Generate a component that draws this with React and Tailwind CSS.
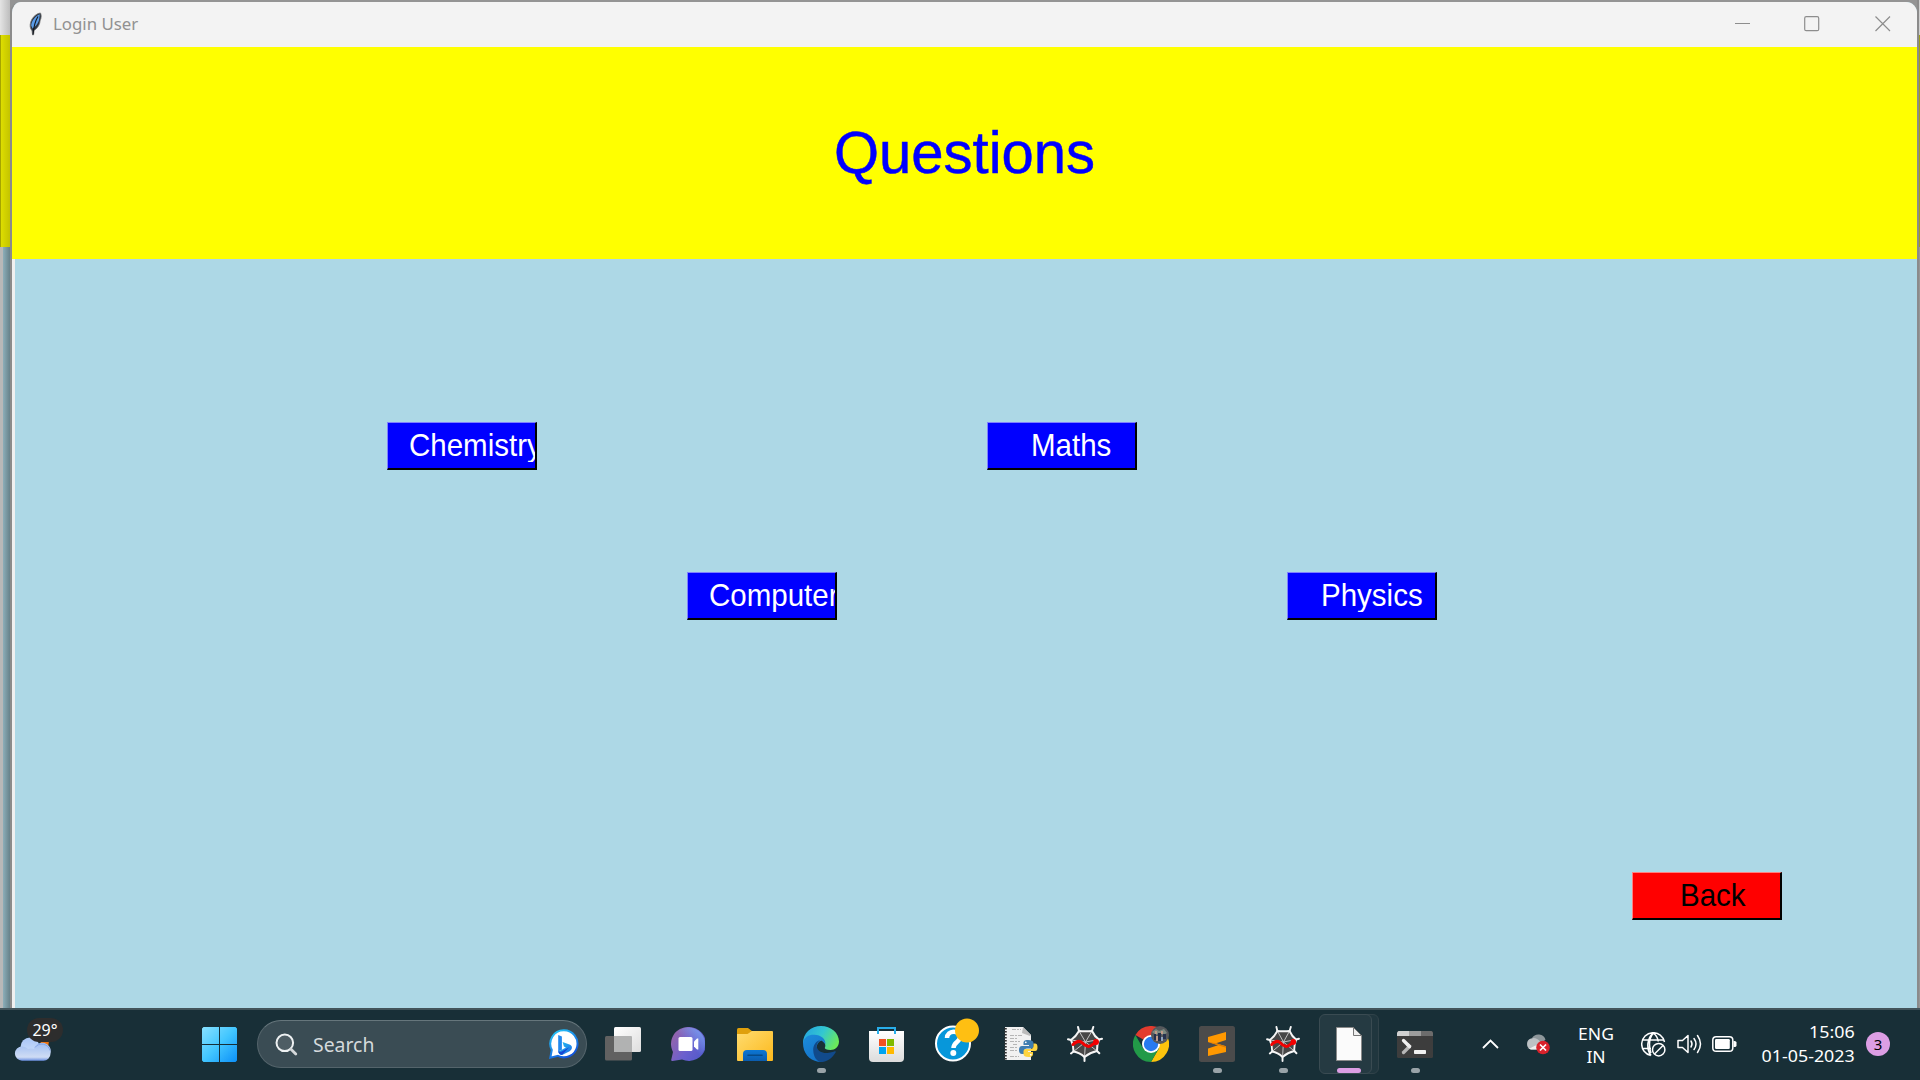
import React from "react";

const UI = "font-['Noto_Sans','Open_Sans',sans-serif]";

function Feather() {
  return (
    <svg width="14" height="24" viewBox="0 0 14 24">
      <path d="M11.5 1C7 1.500 2 6 1.200 12.500c-.3 2.500.5 4.500 1.800 6.300L3.600 23l1-.2.500-4.300C9 16 11 12 11.200 8.500 12.500 6 12.500 3 11.500 1z" fill="#2c3440" stroke="#777" strokeWidth=".8" />
      <path d="M10.800 2.200C6.500 4 2.500 8.500 2.200 13.500l1.300 3C6.500 15 10 10.500 10.300 6.500z" fill="#5a9be6" />
      <path d="M9 4.500C6.500 8.500 4.800 13 4 22.500" stroke="#15181e" strokeWidth="1.100" fill="none" />
    </svg>
  );
}

function TkButton({ children, className, pad }) {
  return (
    <button className={`block h-12 w-[150px] shrink-0 overflow-hidden whitespace-nowrap border-t border-l border-r-2 border-b-2 border-r-black border-b-black pb-[2px] text-left font-['Liberation_Sans',Arial,sans-serif] text-[29.500px] leading-[41px] ${pad} ${className}`}>
      <span className="block origin-center scale-y-[1.05]">{children}</span>
    </button>
  );
}

const blueBtn = "bg-[#0000ff] border-t-[#8080ff] border-l-[#8080ff] text-white";

function Cell({ children, dot }) {
  return (
    <div className="relative flex h-full w-[66px] shrink-0 items-center justify-center pb-[2px]">
      {children}
      {dot && <span className="absolute bottom-[7px] left-[29px] h-[5px] w-[9px] rounded-full bg-[#99a3a8]" />}
    </div>
  );
}

function WeatherIcon() {
  return (
    <svg width="38" height="26" viewBox="0 0 38 26">
      <defs>
        <linearGradient id="cl" x1="0" y1="0" x2="0" y2="1"><stop offset="0" stopColor="#9dbdf2" /><stop offset=".8" stopColor="#cfdcf4" /><stop offset="1" stopColor="#6a8fe0" /></linearGradient>
        <linearGradient id="cl2" x1="0" y1="0" x2="0" y2="1"><stop offset="0" stopColor="#a9c6f7" /><stop offset="1" stopColor="#cfe0fa" /></linearGradient>
      </defs>
      <path d="M26 5h9l-1 7h-5z" fill="#ef7410" />
      <circle cx="16" cy="11" r="9.500" fill="url(#cl2)" />
      <path d="M8 10.500a7 7 0 0 1 6 2.500 8 8 0 0 1 6 0 8.500 8.500 0 0 1 16.500 4.500A7 7 0 0 1 29 24.700H8a7 7 0 0 1 0-14.200z" fill="url(#cl)" />
      <path d="M21 11.500a8.500 8.500 0 0 1 15 3" fill="none" stroke="#86a6e8" strokeWidth="1" />
    </svg>
  );
}

function StartIcon() {
  return (
    <svg width="35" height="35" viewBox="0 0 35 35">
      <defs><linearGradient id="win" x1="0" y1="0" x2="35" y2="35" gradientUnits="userSpaceOnUse"><stop offset="0" stopColor="#88e1ff" /><stop offset=".5" stopColor="#42c6ff" /><stop offset="1" stopColor="#0c90f8" /></linearGradient></defs>
      <path d="M1.500 0H17v17H0V1.500zM18 0h15.500L35 1.500V17H18zM0 18h17v17H1.500L0 33.500zM18 18h17v15.500L33.500 35H18z" fill="url(#win)" />
    </svg>
  );
}

function SearchIcon() {
  return (
    <svg width="23" height="23" viewBox="0 0 23 23" fill="none" stroke="#eef1f2" strokeLinecap="round">
      <circle cx="9.800" cy="9.800" r="8.300" strokeWidth="2" fill="#4e5d64" /><path d="M15.800 16l5 5" strokeWidth="2.800" stroke="#d4d8da" />
    </svg>
  );
}

function BingIcon() {
  return (
    <svg width="30" height="30" viewBox="0 0 30 30">
      <defs>
        <linearGradient id="bg1" x1="0" y1="0" x2=".6" y2="1"><stop offset="0" stopColor="#25cdfa" /><stop offset="1" stopColor="#1356dc" /></linearGradient>
        <linearGradient id="bg2" x1="0" y1="0" x2="1" y2="1"><stop offset="0" stopColor="#26c6ee" /><stop offset="1" stopColor="#1b66e8" /></linearGradient>
      </defs>
      <path d="M15 1.300a13.500 13.500 0 1 1-6 25.600L1.300 28.700 2.800 21A13.500 13.500 0 0 1 15 1.300z" fill="#fff" stroke="url(#bg1)" strokeWidth="2" />
      <path d="M9.200 6l3.700 1.500v13.200L9.200 22.500z" fill="#2188ee" />
      <path d="M9.200 22.500l3.700-1.800 4-2.200-2-1-1.300-4.500 7.500 2.700c3 1.500 2 5-.5 6.500l-7 3.500c-2 .7-4-.2-4.400-3.200z" fill="url(#bg2)" />
      <path d="M9.200 21.500c1 1.800 2.500 1.500 4 .8l7-4-6.700 7.100c-2 .8-4.300-.5-4.300-3.900z" fill="#1747d6" />
    </svg>
  );
}

function TaskViewIcon() {
  return (
    <svg width="36" height="34" viewBox="0 0 36 34">
      <defs><linearGradient id="tv" x1="0" y1="0" x2="1" y2="1"><stop offset="0" stopColor="#fff" /><stop offset="1" stopColor="#dedede" /></linearGradient></defs>
      <rect y="9" width="27" height="24.500" rx="1.500" fill="#616161" />
      <rect x="9" y="0" width="27" height="25" rx="1.500" fill="url(#tv)" />
      <path d="M9 9h17a1 1 0 0 1 1 1v15H9z" fill="#b1b2b2" />
    </svg>
  );
}

function TeamsIcon() {
  return (
    <svg className="-translate-x-[1px]" width="34" height="34" viewBox="0 0 34 34">
      <defs><linearGradient id="tm" x1="0" y1=".2" x2="1" y2=".8"><stop offset="0" stopColor="#9965a8" /><stop offset=".55" stopColor="#6b60ce" /><stop offset="1" stopColor="#5059c9" /></linearGradient>
      <linearGradient id="tm2" x1="0" y1="1" x2="1" y2="0"><stop offset=".5" stopColor="#7ba8f5" stopOpacity="0" /><stop offset="1" stopColor="#7ba8f5" /></linearGradient></defs>
      <path d="M17.500 0a17 17 0 1 1-6.500 32.500L1.500 34c-1 .1-1.500-.5-1.200-1.500L2 25A17 17 0 0 1 17.500 0z" fill="url(#tm)" />
      <circle cx="17.400" cy="17" r="16.600" fill="url(#tm2)" />
      <rect x="7.500" y="10" width="14" height="14" rx="1.500" fill="#fff" /><path d="M23 14.500l3-3h1.300v11H26l-3-3z" fill="#fff" />
    </svg>
  );
}

function FolderIcon() {
  return (
    <svg width="36" height="33" viewBox="0 0 36 33">
      <defs><linearGradient id="fo" x1="0" y1="0" x2="1" y2="1"><stop offset="0" stopColor="#ffdc70" /><stop offset="1" stopColor="#fcb91c" /></linearGradient>
      <linearGradient id="fb" x1="0" y1="0" x2="0" y2="1"><stop offset="0" stopColor="#0c77d4" /><stop offset="1" stopColor="#0b5cae" /></linearGradient></defs>
      <path d="M0 1.500Q0 0 1.500 0H11l4.500 3.500V9H0z" fill="#dfa00c" />
      <path d="M0 6h10.500l4.500-3h20q1 0 1 1v28q0 1-1 1H1q-1 0-1-1z" fill="url(#fo)" />
      <path d="M6 33v-7q0-4 4-4h16q4 0 4 4v7z" fill="url(#fb)" /><path d="M11 27.300h14" stroke="#064a88" strokeWidth="1.600" strokeLinecap="round" />
    </svg>
  );
}

function EdgeIcon() {
  return (
    <svg width="36" height="36" viewBox="0 0 36 36">
      <defs>
        <linearGradient id="e1" x1="0" y1=".2" x2="1" y2=".6"><stop offset="0" stopColor="#24a4df" /><stop offset=".5" stopColor="#33c7d1" /><stop offset="1" stopColor="#6cea58" /></linearGradient>
        <linearGradient id="e2" x1="0" y1="0" x2=".6" y2="1"><stop offset="0" stopColor="#1c8cdb" /><stop offset="1" stopColor="#1472c8" /></linearGradient>
      </defs>
      <path d="M0 17C0 7 8 0 18 0s18 7 18 15.500c0 5-4 8.500-8.500 8.500-4 0-6-1-5.700-2.200C23 20 22.500 16 18 14z" fill="url(#e1)" />
      <path d="M0 17C1 11 6 8.500 11.500 8.800 18 9.200 22.500 12.500 22.500 18l-4-3.500c-3 1-5 4-5 7.500 0 6 6.500 10.500 12 9.500C21 36 17 36 15 35.700 6 34 0 27 0 17z" fill="url(#e2)" />
      <path d="M10.300 25c-.7-5.500 3-10.300 7-11-2.700 2-4.300 5-3.300 7.800 1 3 5 5.700 10.500 5.200 4-.3 7-1.700 7.500-1.700s1 .4.700 1C30.500 30.500 25 36 18.500 36c-5 0-8-6-8.200-11z" fill="#114a8b" />
    </svg>
  );
}

function StoreIcon() {
  return (
    <svg className="-translate-x-[1px]" width="35" height="35" viewBox="0 0 35 35">
      <defs><linearGradient id="st" x1="0" y1="0" x2="0" y2="1"><stop offset="0" stopColor="#fff" /><stop offset="1" stopColor="#dcdcdc" /></linearGradient></defs>
      <path d="M0 4h35v27q0 4-4 4H4q-4 0-4-4z" fill="url(#st)" />
      <path d="M9 7V1h17v6" fill="none" stroke="#28aeea" strokeWidth="2" />
      <path d="M10 12h7v7h-7z" fill="#f25022" /><path d="M18 12h7v7h-7z" fill="#7fba00" /><path d="M10 20h7v7h-7z" fill="#00a4ef" /><path d="M18 20h7v7h-7z" fill="#ffb900" />
    </svg>
  );
}

function HelpIcon() {
  return (
    <svg width="44" height="44" viewBox="0 0 44 44" className="translate-x-[4px] -translate-y-[4px]">
      <circle cx="18" cy="25.500" r="17" fill="#0797da" stroke="#fff" strokeWidth="2" />
      <path d="M12 20c0-8 13-8.500 13-1 0 5-6.500 5-6.500 11" fill="none" stroke="#fff" strokeWidth="4.500" /><circle cx="18.300" cy="35" r="3" fill="#fff" />
      <circle cx="32" cy="12.500" r="12" fill="#ffbf12" />
    </svg>
  );
}

function IdleIcon() {
  return (
    <svg className="translate-x-[2px]" width="34" height="34" viewBox="0 0 34 34">
      <path d="M1 0h18l8 8v25H1z" fill="#f1f1f1" />
      <path d="M19 0l-1 6 8 3 1-1z" fill="#bbb" />
      <path d="M1.500 1v32" stroke="#333" strokeWidth="2.500" strokeDasharray="1.500 1.500" />
      <path d="M8 2.500h9M6 8.500h12M6 11.500h8M6 14.500h10M6 20.500h7M6 23.500h8M6 29.500h9M9 17.500h5" stroke="#b5b5b5" strokeWidth="1" strokeDasharray="4 1 2 1" />
      <path d="M24 13c-4 0-4.500 1.500-4.500 3v2H25v1h-7c-2 0-3 1.500-3 4s1 4 3 4h2v-2.500c0-2 1.300-3 3-3h4.500c1.500 0 2-1 2-2.300V16c0-2-2-3-5.500-3z" fill="#3d7cb0" />
      <path d="M24.500 30c4 0 4.500-1.500 4.500-3v-2h-5v-1h7c2 0 2.500-1.500 2.500-4s-1-3.500-2.500-3.500h-1.500v2.500c0 2-1.300 3-3 3H22c-1.500 0-2.500 1-2.500 2.300V27c0 2 1.500 3 5 3z" fill="#fed43f" />
      <circle cx="21.800" cy="15.300" r=".9" fill="#fff" /><circle cx="26.800" cy="27.700" r=".9" fill="#fff" />
    </svg>
  );
}

function SpyderIcon({ className = "" }) {
  return (
    <svg className={className} width="36" height="36" viewBox="0 0 36 36" fill="none">
      <path d="M12 5L25 5 32 13.500 30 25 17.500 31 6.500 25.500 4 14z" fill="#474747" />
      <path d="M18.500 16L12 5M18.500 16L25 5M18.500 16L32 13.500M18.500 16L30 25M18.500 16l-1 15M18.500 16L6.500 25.500M18.500 16L4 14" stroke="#c4c4c4" strokeWidth="1" />
      <path d="M12 5Q18.500 5.700 25 5 27.500 10.500 32 13.500 29.700 19 30 25 23 26.500 17.500 31 12.500 26.500 6.500 25.500 6.500 19 4 14 9 10.500 12 5z" stroke="#f6f6f6" strokeWidth="2" />
      <path d="M11 1l1 4M26.300 1L25 5M32 13.500l3-.8M30 25l2.300 2.300M17.500 31v4M6.500 25.500L4 27.500M4 14l-3-.8" stroke="#f6f6f6" strokeWidth="2" strokeLinecap="round" />
      <path d="M6 18.500c3.500-3.500 7-4 9.500-1.500 3.500 3.500 7 4.500 10 1.500l4-2.500" stroke="#f20000" strokeWidth="3" strokeLinecap="round" strokeLinejoin="round" />
      <circle cx="29" cy="16" r="3" fill="#f20000" />
    </svg>
  );
}

function ChromeIcon() {
  return (
    <svg width="36" height="36" viewBox="0 0 36 36">
      <path d="M18 18L2.400 9A18 18 0 0 1 33.600 9z" fill="#e23b2e" />
      <path d="M18 9h15.600A18 18 0 0 1 18 36l7.800-13.500z" fill="#fcc40d" />
      <path d="M25.800 22.500L18 36A18 18 0 0 1 2.400 9l7.800 13.500z" fill="#229a48" />
      <circle cx="18" cy="18" r="9" fill="#fff" /><circle cx="18" cy="18" r="7.200" fill="#287af0" />
      <circle cx="27" cy="9" r="9" fill="#56595c" />
      <path d="M19 6l4-3 3 2 5-2 3 4-4 2-3-2-4 2z" fill="#7c8a80" /><path d="M21 8h2v6h-2zM25 7h3v8h-3zM30 8h3v5h-3z" fill="#25304d" /><path d="M23 10h2v5h-2zM28 5h2v3h-2zM22 5h2v3h-2z" fill="#c09a88" /><path d="M28 11h2v4h-2z" fill="#8da3be" />
    </svg>
  );
}

function SublimeIcon() {
  return (
    <svg width="36" height="36" viewBox="0 0 36 36">
      <rect width="36" height="36" rx="2.500" fill="#4b4b4b" />
      <path d="M27 6v8l-10 3.200 10 3V26L9 30v-7.500l10-3.200-10-3.200V11z" fill="#ff9800" />
      <path d="M9 16.100l18 5.600v-1.500l-10-3z" fill="#e07c00" />
    </svg>
  );
}

function FileIcon() {
  return (
    <svg width="26" height="34" viewBox="0 0 26 34">
      <path d="M.5.500h17l8 8v25H.500z" fill="#fbfbfb" stroke="#8a8a8a" /><path d="M17.500.500v8h8z" fill="#eee" stroke="#777" />
    </svg>
  );
}

function TerminalIcon() {
  return (
    <svg width="36" height="27" viewBox="0 0 36 27">
      <rect width="36" height="27" rx="1.500" fill="#3d3d3d" />
      <path d="M1.500 0H12v5H0V1.500z" fill="#d0d0d0" /><path d="M12 0h12v5H12z" fill="#9c9c9c" /><path d="M24 0h10.500L36 1.500V5H24z" fill="#6c6c6c" />
      <path d="M6.500 9.500l6 6" stroke="#f1f1f1" strokeWidth="3.300" strokeLinecap="round" /><path d="M12.500 15.500l-6 6" stroke="#b7b7b7" strokeWidth="3.300" strokeLinecap="round" /><path d="M12.500 15.500l-1.500-1.500" stroke="#ededed" strokeWidth="3.300" strokeLinecap="round" />
      <rect x="17" y="19" width="12" height="4" rx=".8" fill="#f1f1f1" />
    </svg>
  );
}

function CloudError() {
  return (
    <svg width="26" height="22" viewBox="0 0 26 22">
      <path d="M7 5a7.500 7.500 0 0 1 13.500 1.500l-6 6z" fill="#8e979b" />
      <path d="M6 5.500c3-1.500 7 0 9 3l4 2v6H6A5.800 5.800 0 0 1 6 5.500z" fill="#bcc1c4" /><path d="M2 15c4 2 6-3 12-3v4.500H6z" fill="#eee" />
      <circle cx="18" cy="14.500" r="6.800" fill="#d9222b" /><path d="M15 11.500l6 6m0-6l-6 6" stroke="#fff" strokeWidth="1.700" />
    </svg>
  );
}

function GlobeIcon() {
  return (
    <svg width="25" height="25" viewBox="0 0 25 25" fill="none" stroke="#fff" strokeWidth="1.500">
      <path d="M23.500 10A11.500 11.500 0 1 0 10 23.500M2 8h21M2 16.500h8M10 23.500C5 17 6 6 12.300 1 16 4 17 7 17.200 9.500M12.300 1C10 4 8.500 8 8.500 12c0 4 .5 7 1.500 9" />
      <circle cx="17.700" cy="17.700" r="6.200" /><path d="M13.500 22l8.500-8.500" />
    </svg>
  );
}

function SpeakerIcon() {
  return (
    <svg width="25" height="22" viewBox="0 0 25 22" fill="none" stroke="#fff" strokeWidth="1.500" strokeLinejoin="round" strokeLinecap="round">
      <path d="M1 7.500h4.500L11 2.500v17L5.500 14.500H1z" /><path d="M14 8q2 3 0 6M17 5.500q4 5.500 0 11" /><path d="M20.500 2.500q6 8.500 0 17" />
    </svg>
  );
}

function BatteryIcon() {
  return (
    <svg width="25" height="16" viewBox="0 0 25 16">
      <rect x=".8" y=".8" width="20" height="14.400" rx="3.300" fill="none" stroke="#fff" strokeWidth="1.500" /><rect x="3" y="3" width="14.800" height="10" rx="1.200" fill="#fff" /><path d="M21.500 5h1q2 0 2 1.500v3q0 1.500-2 1.500h-1z" fill="#fff" />
    </svg>
  );
}

function LoginWindow() {
  return (
    <div className="flex h-[1008px] bg-[#949494] pt-[2px]">
      <div className="-mt-[2px] flex w-[10px] shrink-0 flex-col">
        <div className="h-[35px] bg-gradient-to-r from-[#e4e4e4] to-[#bdbdbd]" />
        <div className="h-[212px] border-l border-[#a5a500] bg-gradient-to-r from-[#dede00] to-[#c4c400]" />
        <div className="flex-1 border-l-[3px] border-[#b8b8b8] bg-gradient-to-r from-[#8caeb9] to-[#67828a]" />
      </div>
      <div className="flex min-w-0 flex-1 flex-col overflow-hidden rounded-t-[11px] border-l-2 border-[#8b8b8b] bg-[#add8e6]">
        <header className="flex h-[45px] shrink-0 items-center bg-[#f3f3f3] pb-[2px]">
          <div className="ml-[17px] flex"><Feather /></div>
          <span className={`ml-[10px] text-[17px] text-[#919191] ${UI}`}><span className="inline-block origin-left scale-x-[.99]">Login User</span></span>
          <svg className="ml-auto mr-[26px]" width="156" height="16" viewBox="0 0 156 16" fill="none" stroke="#8d8d8d" strokeWidth="1.200">
            <path d="M0 7.500h15" /><rect x="69.700" y=".7" width="14" height="14" rx="1.500" /><path d="M140.500.500l14.500 14.500m0-14.500L140.500 15" />
          </svg>
        </header>
        <div className="flex h-[212px] shrink-0 items-center justify-center bg-[#ffff00] pb-[3px]">
          <h1 className="origin-center scale-y-[1.03] font-['Liberation_Sans',Arial,sans-serif] text-[58px] leading-none text-[#0000ff] [-webkit-text-stroke:0.5px_#0000ff]">Questions</h1>
        </div>
        <main className="flex flex-1 flex-col border-l-[3px] border-[#f0f0f0] pt-[163px]">
          <div className="flex gap-[450px] pl-[372px]">
            <TkButton className={blueBtn} pad="pl-[21px]">Chemistry</TkButton>
            <TkButton className={blueBtn} pad="pl-[43px]">Maths</TkButton>
          </div>
          <div className="mt-[102px] flex gap-[450px] pl-[672px]">
            <TkButton className={blueBtn} pad="pl-[21px]">Computer</TkButton>
            <TkButton className={blueBtn} pad="pl-[33px]">Physics</TkButton>
          </div>
          <div className="mt-[252px] flex pl-[1617px]">
            <TkButton className="border-l-[#ff8080] border-t-[#ff8080] bg-[#ff0000] text-black" pad="pl-[47px]">Back</TkButton>
          </div>
        </main>
      </div>
      <div className="-mt-[2px] flex w-[3px] shrink-0 flex-col border-l-2 border-[#8b8b8b]">
        <div className="h-[35px] bg-[#d0d0d0]" />
        <div className="h-[212px] bg-[#9d9d1c]" />
        <div className="flex-1 bg-[#969696]" />
      </div>
    </div>
  );
}

function Taskbar() {
  return (
    <footer className={`flex h-[72px] items-center border-t-2 border-[#42545b] bg-[#182f37] text-white ${UI}`}>
      <div className="relative h-full w-[202px] shrink-0">
        <div className="absolute left-[14px] top-[26px]"><WeatherIcon /></div>
        <span className="absolute left-[27px] top-[8px] flex h-[24px] w-[36px] items-center justify-center rounded-full bg-[#2d2d2d] text-[16px]">29°</span>
      </div>
      <div className="flex w-[35px] shrink-0 pb-[2px]"><StartIcon /></div>
      <div className="mb-[2px] ml-[20px] flex h-[48px] w-[330px] shrink-0 items-center rounded-full border border-[#54646b] border-t-[#66767c] bg-[#3a4c54]">
        <div className="ml-[17px]"><SearchIcon /></div>
        <span className="ml-[15px] pt-[1px] text-[20px] text-[#d5dadc]"><span className="inline-block origin-left scale-x-[.97]">Search</span></span>
        <div className="ml-auto mr-[7px]"><BingIcon /></div>
      </div>
      <nav className="ml-[3px] flex h-full">
        <Cell><TaskViewIcon /></Cell>
        <Cell><TeamsIcon /></Cell>
        <Cell><FolderIcon /></Cell>
        <Cell dot><EdgeIcon /></Cell>
        <Cell><StoreIcon /></Cell>
        <Cell><HelpIcon /></Cell>
        <Cell><IdleIcon /></Cell>
        <Cell><SpyderIcon /></Cell>
        <Cell><ChromeIcon /></Cell>
        <Cell dot><SublimeIcon /></Cell>
        <Cell dot><SpyderIcon className="scale-x-[.94]" /></Cell>
        <div className="relative flex h-full w-[66px] shrink-0 items-center justify-center pb-[2px]">
          <span className="absolute left-[13px] top-[4px] h-[60px] w-[50px] rounded-[6px] border border-[#304249] bg-[#20363e]" />
          <span className="absolute left-[3px] top-[4px] h-[60px] w-[53px] rounded-[6px] border border-[#3a4b52] bg-[#253a42]" />
          <span className="relative"><FileIcon /></span>
          <span className="absolute bottom-[7px] left-[21px] h-[5px] w-[24px] rounded-full bg-[#dc9ee4]" />
        </div>
        <Cell dot><TerminalIcon /></Cell>
      </nav>
      <div className="ml-[34px] w-[17px] pb-[2px]">
        <svg width="17" height="10" viewBox="0 0 17 10" fill="none" stroke="#fff" strokeWidth="1.800"><path d="M1 9l7.500-7.500L16 9" /></svg>
      </div>
      <div className="ml-[26px] pb-[2px]"><CloudError /></div>
      <div className="ml-[25px] w-[40px] whitespace-nowrap pb-[1px] text-center text-[17px] leading-[23px]"><span className="-ml-4 -mr-4 block scale-x-[1.03]">ENG<br />IN</span></div>
      <div className="ml-[25px] pb-[2px]"><GlobeIcon /></div>
      <div className="ml-[11px] pb-[2px]"><SpeakerIcon /></div>
      <div className="ml-[10px] pb-[2px]"><BatteryIcon /></div>
      <div className="ml-auto whitespace-nowrap pb-[2px] text-right text-[17px] leading-[24px]"><span className="block origin-right scale-x-[1.05]">15:06<br />01-05-2023</span></div>
      <div className="mb-[2px] ml-[11px] mr-[30px] flex h-6 w-6 shrink-0 items-center justify-center rounded-full bg-[#dc9ee4] text-[15px] text-black">3</div>
    </footer>
  );
}

export default function App() {
  return (
    <div className="h-[1080px] w-[1920px] overflow-hidden">
      <LoginWindow />
      <Taskbar />
    </div>
  );
}
